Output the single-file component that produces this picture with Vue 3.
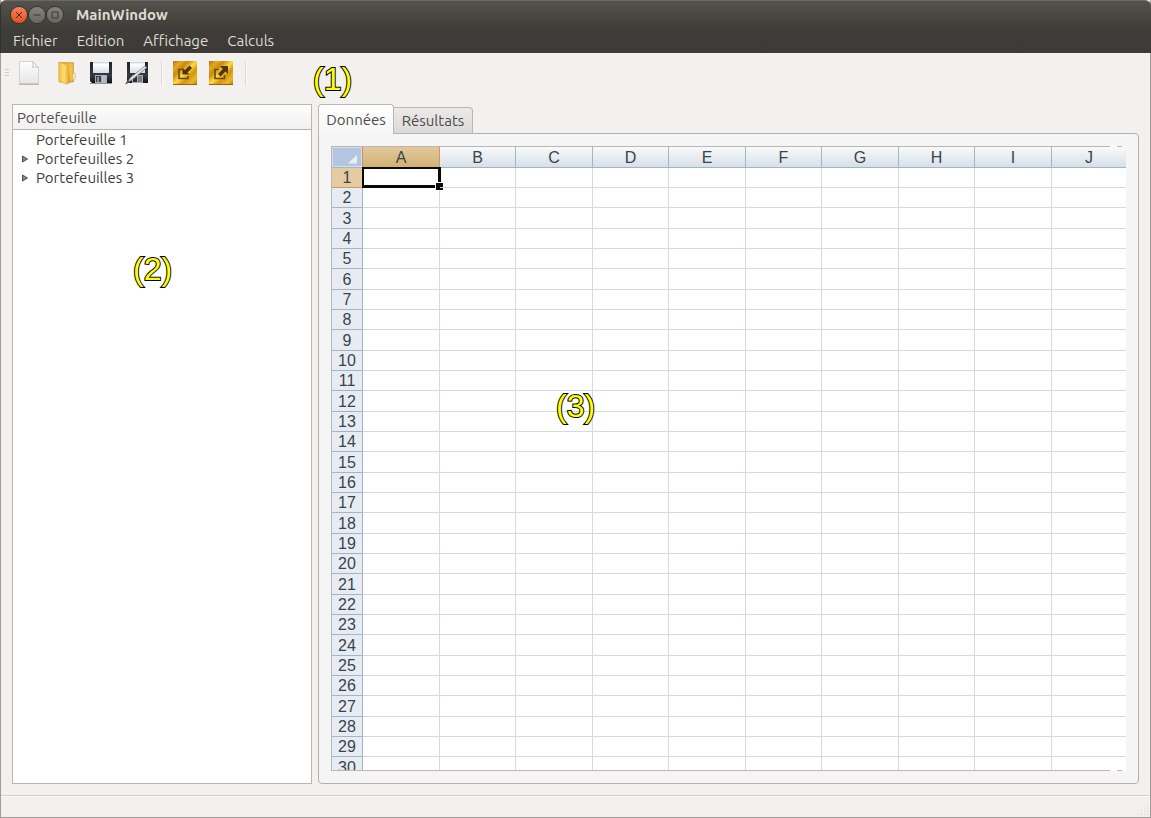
<script setup>
const menus = ['Fichier', 'Edition', 'Affichage', 'Calculs']
const columns = ['A', 'B', 'C', 'D', 'E', 'F', 'G', 'H', 'I', 'J']
const rows = 30
const portfolios = [
  { name: 'Portefeuille 1', expandable: false },
  { name: 'Portefeuilles 2', expandable: true },
  { name: 'Portefeuilles 3', expandable: true },
]
</script>

<template>
  <div class="window">
    <header class="chrome">
      <div class="titlebar">
        <button class="wbtn close" aria-label="Fermer">
          <svg viewBox="0 0 16 16"><path d="M5 5l6 6M11 5l-6 6" /></svg>
        </button>
        <button class="wbtn" aria-label="Réduire">
          <svg viewBox="0 0 16 16"><path d="M4.500 8h7" /></svg>
        </button>
        <button class="wbtn" aria-label="Agrandir">
          <svg viewBox="0 0 16 16"><path d="M5 5h6v6h-6z" /></svg>
        </button>
        <h1>MainWindow</h1>
      </div>
      <nav class="menubar">
        <button v-for="m in menus" :key="m">{{ m }}</button>
      </nav>
    </header>

    <div class="toolbar">
      <span class="grip"></span>
      <button class="tool" aria-label="Nouveau">
        <svg viewBox="0 0 24 24">
          <defs>
            <linearGradient id="paper" x2="0" y2="1"><stop stop-color="#fefefe" /><stop offset="1" stop-color="#e6e6e6" /></linearGradient>
          </defs>
          <path d="M2.500.5h13l6 6V22.500h-19z" fill="url(#paper)" stroke="#d2d2d1" />
          <path d="M2 23.300h20" stroke="#aaa" stroke-width="1" />
          <path d="M15.500.5q1.500 4-.3 5.800 3.600-1 6.300.2z" fill="#fff" stroke="#c4c4c4" />
        </svg>
      </button>
      <button class="tool" aria-label="Ouvrir">
        <svg viewBox="0 0 24 24">
          <defs>
            <linearGradient id="folder"><stop stop-color="#f4c04a" /><stop offset=".5" stop-color="#ffdc73" /><stop offset="1" stop-color="#dda126" /></linearGradient>
          </defs>
          <path d="M6 1.500h14.500V21H6z" fill="#e3ab38" stroke="#cd9426" stroke-width=".6" />
          <path d="M13 2.500h6.500v17H13z" fill="#efc050" />
          <path d="M20 12.500h2.200v5l-2.200 1.500" fill="#f7ecd0" stroke="#e3b95c" stroke-width=".8" />
          <path d="M6 1.200l9.500 3V13l1 1v7.500l-3 1.500L6 20.500z" fill="url(#folder)" stroke="#d99d28" stroke-width=".5" />
          <path d="M14 23.200l4-2h-2z" fill="#b5aa98" />
        </svg>
      </button>
      <button class="tool" aria-label="Enregistrer">
        <svg viewBox="0 0 24 24">
          <defs>
            <linearGradient id="disk" x2="0" y2="1"><stop stop-color="#20232d" /><stop offset=".65" stop-color="#343946" /><stop offset="1" stop-color="#11131a" /></linearGradient>
            <linearGradient id="label" x2="0" y2="1"><stop stop-color="#bbd0df" /><stop offset=".2" stop-color="#fff" /><stop offset="1" stop-color="#d5dfe7" /></linearGradient>
          </defs>
          <path d="M1 1h22v21H3l-2-2z" fill="url(#disk)" />
          <path d="M4 1h16v11H4z" fill="url(#label)" />
          <path d="M6 14h12v8H6z" fill="#a9adb1" />
          <path d="M7 15h5v6H7z" fill="#3a3f48" /><path d="M8 16h2v5H8z" fill="#8c9197" />
          <path d="M13 15h4v6h-4z" fill="#b8bcbe" /><path d="M1 22.500h22" stroke="#92959a" />
        </svg>
      </button>
      <button class="tool" aria-label="Enregistrer sous">
        <svg viewBox="0 0 24 24">
          <path d="M2 1h21v21H4l-2-2z" fill="url(#disk)" />
          <path d="M5 1h15v11H5z" fill="url(#label)" />
          <path d="M7 14h11v8H7z" fill="#a9adb1" />
          <path d="M8 15h4v6H8z" fill="#292d36" /><path d="M13 15h4v6h-4z" fill="#777c83" />
          <path d="M2 22l3-5L20 5l2 1.500L7 19z" fill="#d0d0d0" stroke="#77777b" stroke-width=".7" />
          <path d="M0 23.500l3-5 2.500 2.500z" fill="#555" /><path d="M6 17.500L20 6.500" stroke="#f4f4f4" />
        </svg>
      </button>
      <span class="separator"></span>
      <button class="tool" aria-label="Importer">
        <svg viewBox="0 0 24 24">
          <defs>
            <linearGradient id="gold" x2="1" y2="1">
              <stop stop-color="#b27510" /><stop offset=".18" stop-color="#e6a917" /><stop offset=".32" stop-color="#c98912" />
              <stop offset=".5" stop-color="#fcd945" /><stop offset=".66" stop-color="#d39414" /><stop offset=".84" stop-color="#edb722" /><stop offset="1" stop-color="#b1740e" />
            </linearGradient>
          </defs>
          <path d="M0 0h24v24H0z" fill="url(#gold)" />
          <path d="M0 23.500h24" stroke="#9a6109" />
          <path d="M9 8.500H6v9h9V15" fill="none" stroke="#6b4a0c" stroke-width="1.600" />
          <path d="M16.500 4.500l2.500 2.500-4.500 4.500 2 2H9.500V6.500l2.500 2.500z" fill="#513508" />
        </svg>
      </button>
      <button class="tool" aria-label="Exporter">
        <svg viewBox="0 0 24 24">
          <path d="M0 0h24v24H0z" fill="url(#gold)" />
          <path d="M0 23.500h24" stroke="#9a6109" />
          <path d="M9.500 8.500H6v9h9.500V14" fill="none" stroke="#6b4a0c" stroke-width="1.600" />
          <path d="M11 5h8v8l-2.500-2.500-5 5-2.500-2.500 4.800-5z" fill="#513508" />
        </svg>
      </button>
      <span class="separator"></span>
      <span class="mark mark-toolbar">(1)</span>
    </div>

    <main class="content">
      <aside class="tree">
        <h2>Portefeuille</h2>
        <ul>
          <li v-for="p in portfolios" :key="p.name">
            <button v-if="p.expandable" class="expander" :aria-label="'Déplier ' + p.name">
              <svg viewBox="0 0 8 8"><path d="M1.500 1L6.500 4l-5 3z" fill="#8a8986" stroke="#504f4c" /></svg>
            </button>
            <span v-else class="expander"></span>
            {{ p.name }}
          </li>
        </ul>
        <span class="mark mark-tree">(2)</span>
      </aside>

      <section class="tabs">
        <div class="tablist" role="tablist">
          <button class="tab active" role="tab" aria-selected="true">Données</button>
          <button class="tab" role="tab" aria-selected="false">Résultats</button>
        </div>
        <div class="pane" role="tabpanel">
          <div class="sheet">
            <table>
              <thead>
                <tr>
                  <th class="corner"><svg viewBox="0 0 30 19"><path d="M16 15.500h9v-9z" fill="#e8edf3" /></svg></th>
                  <th v-for="c in columns" :key="c" scope="col">{{ c }}</th>
                </tr>
              </thead>
              <tbody>
                <tr v-for="r in rows" :key="r">
                  <th scope="row">{{ r }}</th>
                  <td v-for="c in columns" :key="c"><span v-if="r === 1 && c === 'A'" class="cursor"></span></td>
                </tr>
              </tbody>
            </table>
          </div>
          <span class="mark mark-sheet">(3)</span>
        </div>
      </section>
    </main>

    <footer class="statusbar">
      <svg class="sizegrip" viewBox="0 0 12 12">
        <path d="M10 1h1M7 4h1M10 4h1M4 7h1M7 7h1M10 7h1M1 10h1M4 10h1M7 10h1M10 10h1" stroke="#ceccc8" stroke-width="1" />
      </svg>
    </footer>
  </div>
</template>

<style>
body { background: #f2f1f0; }
</style>

<style scoped>
* { box-sizing: border-box; }
button { font: inherit; color: inherit; background: none; border: 0; padding: 0; margin: 0; }
svg { display: block; }
.window {
  height: 100vh;
  display: flex;
  flex-direction: column;
  border: 1px solid #a09d98;
  border-top: 0;
  background: #f2f1f0;
  color: #4c4c4c;
  font: 15px/19px Ubuntu, "Noto Sans", sans-serif;
}
.chrome {
  margin: 0 -1px;
  height: 53px;
  flex: none;
  background: linear-gradient(#53524c, #3e3d39 28px, #3c3b37);
  border-top: 1px solid #6a6964;
  border-left: 1px solid #33322f;
  border-radius: 6px 6px 0 0;
  color: #dfdbd2;
}
.titlebar { display: flex; align-items: center; height: 27px; padding-left: 10px; gap: 2px; }
.titlebar h1 { margin: 0 0 0 11px; font-size: 15px; line-height: 19px; font-weight: 700; }
.wbtn { width: 16px; height: 16px; border-radius: 50%; background: linear-gradient(#85837c, #66655f); box-shadow: 0 0 0 1px #353430; }
.wbtn svg { fill: none; stroke: #3a3935; stroke-width: 1; }
.wbtn.close { background: linear-gradient(#f6855e, #e4501c); }
.wbtn.close svg { stroke: #5a2411; }
.menubar { display: flex; height: 25px; padding-left: 12px; gap: 19px; }
.toolbar { position: relative; display: flex; align-items: center; height: 40px; flex: none; padding-left: 4px; }
.grip { width: 4px; height: 8px; margin-right: 8px; background: repeating-linear-gradient(#cfccc8 0 1px, #f2f1f0 1px 3px); }
.tool { width: 24px; height: 24px; margin-right: 12px; }
.separator { width: 2px; height: 24px; margin-right: 10px; background: #dcd9d6; border-right: 1px solid #faf9f9; }
.content { flex: 1; min-height: 0; display: flex; gap: 6px; padding: 11px; }
.tree { position: relative; width: 300px; flex: none; background: #fff; border: 1px solid #bab6b0; }
.tree h2 { margin: 0; height: 25px; padding: 3px 4px; font-size: 15px; line-height: 19px; font-weight: 400; background: linear-gradient(#fdfdfd, #f1f0ef); border-bottom: 1px solid #b5b2a6; }
.tree ul { list-style: none; margin: 0; padding: 0; color: #3c3c3c; }
.tree li { display: flex; align-items: center; height: 19px; padding-left: 8px; }
.expander { width: 8px; height: 8px; margin-right: 7px; }
.tabs { flex: 1; min-width: 0; display: flex; flex-direction: column; }
.tablist { display: flex; align-items: flex-end; height: 30px; margin-bottom: -1px; flex: none; z-index: 1; }
.tab { height: 27px; width: 79px; border: 1px solid #bab6b0; border-left: 0; border-radius: 0 4px 0 0; background: linear-gradient(#eceae9, #dcdad8); }
.tab.active { height: 30px; width: 76px; border-left: 1px solid #bab6b0; border-radius: 4px 4px 0 0; border-bottom: 0; background: linear-gradient(#fff, #f6f6f6); }
.pane { position: relative; flex: 1; min-height: 0; display: flex; padding: 12px; border: 1px solid #b5b0aa; border-radius: 0 4px 4px 4px; background: #f5f5f5; }
.sheet { flex: 1; min-width: 0; overflow: hidden; border: 1px solid #bab7b0; border-right: 0; background: #fff; }
.pane::before, .pane::after { content: ""; position: absolute; right: 12px; width: 16px; height: 1px; background: linear-gradient(90deg, #fff 7px, #bab7b0 7px 12px, #fff 12px); }
.pane::before { top: 12px; }
.pane::after { bottom: 12px; }
table { width: 100%; table-layout: fixed; border-collapse: separate; border-spacing: 0; }
th, td { padding: 0; height: 20px; border-right: 1px solid #d5d9e3; border-bottom: 1px solid #d5d9e3; }
tbody tr:nth-child(3n) > * { height: 21px; }
th { font: 16px/19px "Liberation Sans", sans-serif; color: #38444c; border-color: #9eb6ca; }
thead th { height: 21px; width: 76px; background: linear-gradient(#f8fafb, #d8dfe7); }
thead th:nth-child(2n) { width: 77px; }
thead th:last-child { width: auto; border-right: 0; }
td:last-child { border-right: 0; }
tbody th { background: #e7ecf3; }
thead th.corner { width: 31px; background: #b3c5df; box-shadow: inset 0 0 0 1px #d4dfed; border-right-color: #c8925c; }
thead th:nth-child(2) { background: linear-gradient(#e1c89c, #d2b276); border-right-color: #d99756; }
tbody tr:first-child th { background: #e5cba0; border-color: #d4975b; }
tbody tr:first-child td { position: relative; }
.cursor { position: absolute; inset: -1px -2px -1px -1px; border: 2px solid #0b0906; border-width: 2px 3px 3px 2px; }
.cursor::after { content: ""; position: absolute; right: -5px; bottom: -5px; width: 7px; height: 7px; background: #0b0906; border: 1px solid #fff; border-right: 0; border-bottom: 0; }
.mark { position: absolute; font: 32px/36px "Liberation Sans", sans-serif; color: #ff0; -webkit-text-stroke: 2px #000; paint-order: stroke fill; pointer-events: none; }
.mark-toolbar { left: 312px; top: 8px; }
.mark-tree { left: 120px; top: 146px; }
.mark-sheet { left: 237px; top: 254px; }
.statusbar { height: 22px; flex: none; display: flex; justify-content: flex-end; align-items: flex-end; padding: 0 1px 1px; border-top: 1px solid #d3d1ce; box-shadow: inset 0 1px #fbfafa; }
.sizegrip { width: 12px; height: 12px; }
</style>
